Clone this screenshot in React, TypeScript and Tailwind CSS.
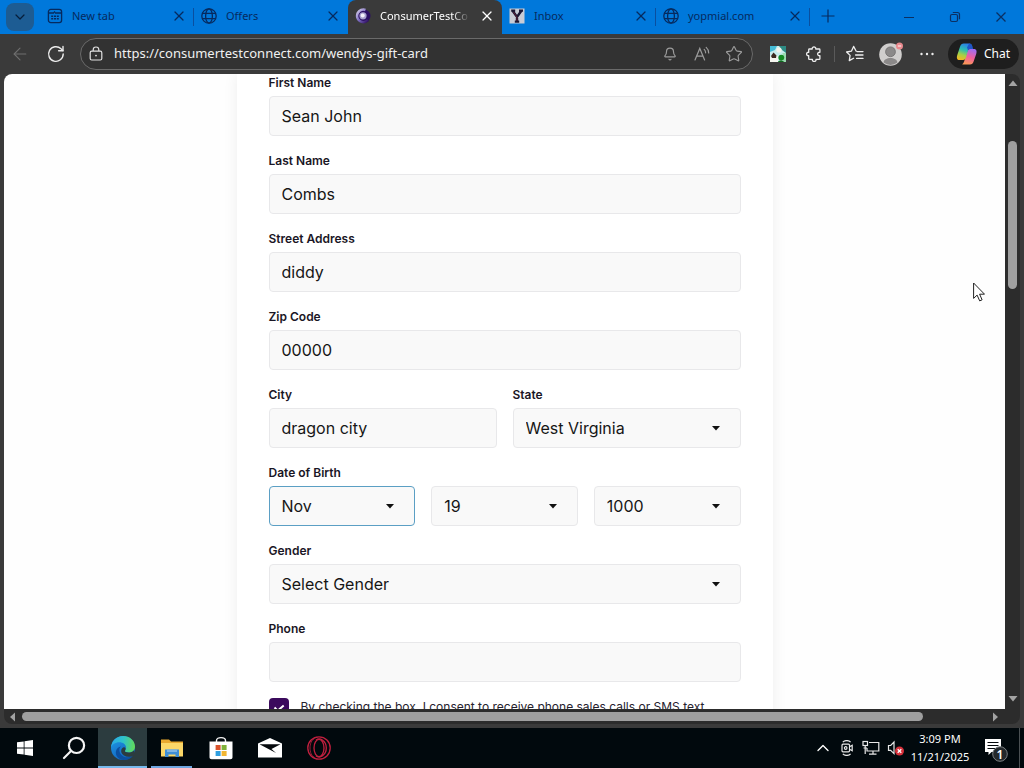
import React, { ReactNode } from "react";
import { ArrowLeft, Bell, ChevronDown, ChevronUp, Star, X } from "lucide-react";

const uiFont = "font-['Noto_Sans','Open_Sans',sans-serif]";
const fieldClass =
  "block h-10 w-full appearance-none rounded border bg-[#f9f9f9] px-3 text-base text-[#161616] outline-none";

/* --- BROWSER ICONS --- */

function NewTabIcon() {
  return (
    <svg className="size-4" viewBox="0 0 16 16" fill="none" stroke="currentColor" strokeWidth="1.3">
      <rect x="1.4" y="1.4" width="13.200" height="13.200" rx="2.400" />
      <path d="M1.400 5h5.100l1.500-1.500M8 5h6.600" />
      <path d="M4.200 8.300h2M7 8.300h2M9.800 8.300h2M4.200 10.800h2M7 10.800h2M9.800 10.800h2" strokeWidth="1.400" />
    </svg>
  );
}

function GlobeIcon() {
  return (
    <svg className="size-4" viewBox="0 0 16 16" fill="none" stroke="currentColor" strokeWidth="1.300">
      <circle cx="8" cy="8" r="7.200" />
      <ellipse cx="8" cy="8" rx="3.400" ry="7.200" />
      <path d="M1.500 5.400h13M1.500 10.600h13" />
    </svg>
  );
}

function ConsumerIcon() {
  return (
    <svg className="size-4" viewBox="0 0 16 16" fill="none">
      <defs>
        <linearGradient id="consumer" x1="0" y1="0" x2="1" y2="1">
          <stop offset="0" stopColor="#d5cde8" />
          <stop offset="0.5" stopColor="#7c6cc0" />
          <stop offset="1" stopColor="#2c0a5e" />
        </linearGradient>
      </defs>
      <circle cx="9" cy="8" r="6.500" fill="#2c0f63" />
      <path d="M10.500 1.900A6.300 6.300 0 1 0 13 12.200" stroke="url(#consumer)" strokeWidth="2.600" />
      <circle cx="8" cy="7.800" r="3.600" fill="#a79fce" />
      <circle cx="7.700" cy="7.600" r="2" fill="#f5f2fb" />
    </svg>
  );
}

function InboxIcon() {
  return (
    <svg className="size-4" viewBox="0 0 16 16">
      <rect x="0.500" y="0.500" width="15" height="15" fill="#c9ccd6" />
      <path d="M2.200 2.600h4M10 2.600h4M3.600 2.800 8 9l4.400-6.200M8 8.600v5M5.800 13.600h4.400" stroke="#1c1734" strokeWidth="2.400" fill="none" />
      <path d="M4.400 4 8 9.200V13" stroke="#8a2538" strokeWidth="0.600" fill="none" />
    </svg>
  );
}

function RefreshIcon() {
  return (
    <svg className="size-5" viewBox="0 0 20 20" fill="none" stroke="#ececec" strokeWidth="1.400" strokeLinecap="round">
      <path d="M17.200 10a7.300 7.300 0 1 1-2.200-5.200L16.800 6.600" />
      <path d="M17 2.400v4.400h-4.400" />
    </svg>
  );
}

function LockIcon() {
  return (
    <svg className="size-4 shrink-0" viewBox="0 0 16 16" fill="none" stroke="#e0e0e0" strokeWidth="1.200">
      <rect x="2.200" y="5.200" width="11.600" height="8.800" rx="1.500" />
      <path d="M5.200 5V3.800a2.800 2.800 0 0 1 5.600 0V5" />
      <circle cx="8" cy="9.600" r="0.900" fill="#e0e0e0" stroke="none" />
    </svg>
  );
}

function ReadAloudIcon() {
  return (
    <svg className="size-5" viewBox="0 0 20 20" fill="none" stroke="#9c9c9c" strokeWidth="1.200" strokeLinecap="round">
      <path d="M3 16 7.800 4.400 12.600 16M4.600 12.200H11" />
      <path d="M12.200 5.400c1 .9 1.400 2 1.400 3.400M14.200 3.400c1.700 1.500 2.500 3.200 2.500 5.600" />
    </svg>
  );
}

function ExtensionIcon() {
  return (
    <svg className="size-4" viewBox="0 0 16 16">
      <rect width="16" height="16" fill="#c8ecec" />
      <path d="M0 0h7l-2 4-5 2z" fill="#45bcd6" />
      <path d="M9 0h7v7l-4-3z" fill="#2e8b84" />
      <circle cx="9" cy="4" r="2.600" fill="#f3f3ea" />
      <path d="M0 11.500 3.400 7 8 10.500V16H0z" fill="#f5f5ef" />
      <path d="M1 10 3.500 6.500l3 3-.5 2.500H2z" fill="#3b2a20" />
      <path d="M12.500 7H16v9h-3z" fill="#9adbb0" />
      <circle cx="11.300" cy="11.600" r="2.900" fill="#138a22" />
      <path d="M8 16c.2-2 5.600-2 5.800 0z" fill="#0e6c1c" />
    </svg>
  );
}

function PuzzleIcon() {
  return (
    <svg className="size-4" viewBox="0 0 16 16" fill="none" stroke="#ededed" strokeWidth="1.300" strokeLinejoin="round">
      <path d="M3.400 3h2.800c-.4-2.800 4-2.800 3.600 0h3.400c.4 0 .7.300.7.700v2.600c-3-.4-3 3.800 0 3.400v3c0 .4-.3.700-.7.700H10c.4 2.800-4 2.800-3.600 0h-3c-.4 0-.7-.3-.7-.7v-3c-2.800.4-2.800-3.800 0-3.400V3.700c0-.4.3-.7.7-.7z" />
    </svg>
  );
}

function FavoritesIcon() {
  return (
    <svg className="size-5" viewBox="0 0 20 20" fill="none" stroke="#ededed" strokeWidth="1.300" strokeLinecap="round" strokeLinejoin="round">
      <path d="M11.200 7.200 8.600 2.400 6.400 7.200 1.600 8l3.500 3.400-.8 5.200 4.300-2.400" />
      <path d="M12 7.600h6M10.600 11h7.400M11.600 14.400H18" />
    </svg>
  );
}

function AvatarIcon() {
  return (
    <svg className="size-6" viewBox="0 0 24 24">
      <circle cx="11.500" cy="12.500" r="11.300" fill="#d0cecd" />
      <circle cx="11.500" cy="9.800" r="4.900" fill="#8b8989" stroke="#6f6d6d" strokeWidth="0.800" />
      <path d="M4.600 20.600c.2-6 13.600-6 13.800 0a11 11 0 0 1-13.800 0z" fill="#8b8989" />
      <circle cx="20.500" cy="4" r="3.500" fill="#e8898d" />
      <path d="M18.800 4h3.400" stroke="#fbe6e6" strokeWidth="1.200" />
    </svg>
  );
}

function CopilotIcon() {
  return (
    <svg className="size-6 shrink-0" viewBox="0 0 24 24">
      <defs>
        <linearGradient id="cpLeft" x1="0.600" y1="0" x2="0.300" y2="1">
          <stop offset="0" stopColor="#2b7de9" />
          <stop offset="0.400" stopColor="#2cc0b0" />
          <stop offset="0.700" stopColor="#a6d046" />
          <stop offset="1" stopColor="#f2b824" />
        </linearGradient>
        <linearGradient id="cpRight" x1="0.600" y1="0" x2="0.300" y2="1">
          <stop offset="0" stopColor="#a06cf0" />
          <stop offset="0.500" stopColor="#f0609c" />
          <stop offset="1" stopColor="#fb9a52" />
        </linearGradient>
      </defs>
      <path d="M9.500 22.500h5.500c2 0 3-1.200 3.600-3l2.600-7.500c.9-2.800.3-5-2.200-5h-4c-1.400 0-2.200.8-2.700 2.300l-3 9.700c-.5 1.600-1 2.700-2.300 3.200.5.200 1.500.3 2.500.3z" fill="url(#cpRight)" />
      <path d="M14.200 1.500H8.800C6.900 1.500 5.700 2.700 5.100 4.600L2.300 13c-.9 2.900-.4 5 2.300 5h3.600c1.500 0 2.300-.8 2.800-2.400L13.400 7c.5-1.600 1.300-2.500 2.800-2.500h1.200c-.6-1.900-1.500-3-3.200-3z" fill="url(#cpLeft)" />
      <path d="M14.200 1.500c2 0 2.800 1.400 3.300 3.200l.7 2.300h-3c-1.300 0-1.700.3-2.100 1.400L12 5.500z" fill="#1f55c8" />
    </svg>
  );
}

/* --- TASKBAR ICONS --- */

function WindowsIcon() {
  return (
    <svg className="size-4" viewBox="0 0 16 16" fill="#fff">
      <path d="M0 2.300 6.700 1.400v6.200H0zM7.500 1.300 16 0v7.600H7.500zM0 8.400h6.700v6.200L0 13.700zM7.500 8.400H16V16l-8.500-1.200z" />
    </svg>
  );
}

function SearchIcon() {
  return (
    <svg className="size-6" viewBox="0 0 24 24" fill="none" stroke="#f5f5f5" strokeWidth="2.200" strokeLinecap="round">
      <circle cx="14.500" cy="9.400" r="7.600" />
      <path d="M9 15 2 22" />
    </svg>
  );
}

function EdgeIcon() {
  return (
    <svg className="size-6" viewBox="0 0 24 24">
      <defs>
        <linearGradient id="edgeTop" x1="0" y1="0.400" x2="1" y2="0.500">
          <stop offset="0" stopColor="#2aa9e8" />
          <stop offset="0.500" stopColor="#2fc3c8" />
          <stop offset="1" stopColor="#62d957" />
        </linearGradient>
        <linearGradient id="edgeBody" x1="0" y1="0" x2="0.600" y2="1">
          <stop offset="0" stopColor="#1f9be6" />
          <stop offset="1" stopColor="#1262bd" />
        </linearGradient>
      </defs>
      <circle cx="12" cy="12" r="12" fill="url(#edgeBody)" />
      <path d="M0 11.500C.5 5 5.500 0 12 0c7 0 12 5 12 10.500 0 4-3 6-6.500 6-2.500 0-4.200-.9-3.400-2 .7-.9 1-1.600 1-2.700C15 8.500 12 6.300 8.300 6.300 4 6.300 1 8.600 0 11.500z" fill="url(#edgeTop)" />
      <path d="M8.500 12.500c-1 5.500 4 10 10 8.600 1.500-.4 3-1 3.800-1.700C20.200 22.400 16.500 24 12.500 24 7 23.600 4 19 5 15c.7-2.700 2.500-4 5-4.500-.8.500-1.300 1.200-1.500 2z" fill="#0c4f9f" />
      <path d="M14.100 14.500c-.8 1.100.9 2 3.400 2 2.200 0 4.100-.6 5.300-2 .8 1.500.6 3.600-.5 4.900-2.300 1.400-6.300 1.900-9.300.1-2.200-1.300-3.200-3.600-2.700-5.500.3-1.400 1.300-2.500 2.700-2.700 1.400 0 2.200 1.600 1.100 3.200z" fill="#2c3c3f" />
    </svg>
  );
}

function ExplorerIcon() {
  return (
    <svg className="size-6" viewBox="0 0 24 24">
      <path d="M1 3.500h8l2 2h12V20H1z" fill="#e9a92f" />
      <path d="M1 7h22v13.500H1z" fill="#fbd768" />
      <path d="M5 13.500h14V21h-3.500v-2.600h-7V21H5z" fill="#3f8fd6" />
      <path d="M7 13.500h10v2.500H7z" fill="#7eb5e4" />
    </svg>
  );
}

function StoreIcon() {
  return (
    <svg className="size-6" viewBox="0 0 24 24">
      <path d="M7.500 6V4.500C7.500.6 16.500.6 16.500 4.500V6" fill="none" stroke="#f5f5f5" strokeWidth="1.400" />
      <path d="M.5 5.600h23v15.600c0 1.200-.8 2-2 2h-19c-1.200 0-2-.8-2-2z" fill="#fff" />
      <path d="M6.600 9h5v5h-5z" fill="#d9532c" />
      <path d="M12.600 9h5v5h-5z" fill="#7fb13a" />
      <path d="M6.600 15h5v5h-5z" fill="#2f9fe0" />
      <path d="M12.600 15h5v5h-5z" fill="#f2b632" />
    </svg>
  );
}

function MailIcon() {
  return (
    <svg className="size-6" viewBox="0 0 24 24">
      <path d="M0 7.500 12 2l12 5.500V21.500H0z" fill="#fff" />
      <path d="M1.500 8.200h21L13.500 13l4.500 4z" fill="#05090c" />
    </svg>
  );
}

function OperaIcon() {
  return (
    <svg className="size-6" viewBox="0 0 24 24" fill="none" stroke="#c0203f" strokeWidth="1.300">
      <circle cx="12" cy="12" r="11.200" />
      <ellipse cx="12" cy="12" rx="5" ry="8.600" />
      <path d="M9 4.200c4-3.400 10.300 1 10.300 7.800S13 23 9 19.800" />
      <path d="M9.500 1.200C4 3.500 3 8.500 3 12s1 8.500 6.500 10.800" strokeWidth="0.800" />
    </svg>
  );
}

function CameraIcon() {
  return (
    <svg className="size-4" viewBox="0 0 16 16" fill="none" stroke="#e8e8e8" strokeWidth="1.200">
      <rect x="3" y="4.200" width="7.500" height="7.600" rx="1" />
      <circle cx="6.700" cy="8" r="1.300" />
      <path d="m10.500 6.800 2.700-1.600v5.600l-2.700-1.600M3.800 2.200C6 0 9.500 0 11.600 2.200M3.800 13.800c2.200 2.200 5.700 2.200 7.800 0" />
    </svg>
  );
}

function NetworkIcon() {
  return (
    <svg className="h-4 w-[18px]" viewBox="0 0 18 16" fill="none" stroke="#e8e8e8" strokeWidth="1.200">
      <path d="M7 2.500h9.800v8.500H5V8" />
      <rect x="1" y="1.500" width="4.500" height="4" />
      <path d="M3.200 5.500V14M11 11v3M7 14.200h7.500M1.500 8h3.500" />
    </svg>
  );
}

function SpeakerIcon() {
  return (
    <svg className="h-4 w-[18px]" viewBox="0 0 18 16" fill="none" stroke="#e8e8e8" strokeWidth="1.200">
      <path d="M2.500 5.500h2.200L8 2v11.600L4.700 10.400H2.500z" />
      <circle cx="13.500" cy="11" r="4.500" fill="#d5303a" stroke="none" />
      <path d="m11.700 9.200 3.600 3.600m0-3.600-3.600 3.600" stroke="#fff" strokeWidth="1.300" />
    </svg>
  );
}

function NotificationIcon() {
  return (
    <svg className="h-7 w-6" viewBox="0 0 24 28">
      <path d="M1 5h16v13H7.500L4.500 21v-3H1z" fill="#fff" />
      <path d="M3.500 8.500h11M3.500 11.500h11M3.500 14.500h8" stroke="#05090c" strokeWidth="1" />
      <circle cx="16" cy="20" r="7.300" fill="#23282b" stroke="#7b8083" />
      <text x="16" y="24.500" textAnchor="middle" fontSize="12" fontWeight="600" fill="#fff">1</text>
    </svg>
  );
}

/* --- TABS --- */

interface TabProps {
  icon: ReactNode;
  title: string;
  active?: boolean;
  divider?: boolean;
}

function Tab({ icon, title, active, divider }: TabProps) {
  return (
    <div
      className={`relative flex w-[154px] min-w-0 items-center gap-[9px] px-[7px] pb-[2px] ${
        active ? "rounded-t-lg bg-[#3a3a3a] text-white" : "text-[#062a5e]"
      }`}
    >
      <span className="shrink-0">{icon}</span>
      <span
        className={`min-w-0 flex-1 text-[11px] whitespace-nowrap ${
          active ? "[mask-image:linear-gradient(to_right,black_80%,transparent)]" : ""
        }`}
      >
        {title}
      </span>
      <button type="button" aria-label={`Close ${title}`} className="shrink-0">
        <X className="size-4" strokeWidth={1.8} />
      </button>
      {divider && <span className="absolute top-2 right-0 h-[18px] w-px bg-[#0a4f9f]" />}
    </div>
  );
}

function TabStrip() {
  return (
    <div className="flex h-[34px] shrink-0 bg-[#0078db]">
      <button type="button" aria-label="Tab actions" className="mx-1.5 mt-[3px] flex size-7 items-center justify-center rounded-lg bg-[#1d5c93] text-[#071d3a]">
        <ChevronDown className="size-4" strokeWidth={1.8} />
      </button>
      <Tab icon={<NewTabIcon />} title="New tab" divider />
      <Tab icon={<GlobeIcon />} title="Offers" />
      <Tab icon={<ConsumerIcon />} title="ConsumerTestCo" active />
      <Tab icon={<InboxIcon />} title="Inbox" divider />
      <Tab icon={<GlobeIcon />} title="yopmial.com" divider />
      <button type="button" aria-label="New tab" className="flex w-[35px] items-center justify-center pb-[2px] text-[#062a5e]">
        <svg className="size-4" viewBox="0 0 16 16" stroke="currentColor" strokeWidth="1.200">
          <path d="M1.500 8h13M8 1.500v13" />
        </svg>
      </button>
      <div className="ml-auto flex text-[#0a2f63]">
        <button type="button" aria-label="Minimize" className="flex w-[46px] items-center justify-center">
          <span className="h-px w-2.5 bg-current" />
        </button>
        <button type="button" aria-label="Restore" className="flex w-[46px] items-center justify-center">
          <svg className="size-3" viewBox="0 0 12 12" fill="none" stroke="currentColor" strokeWidth="1.200">
            <rect x="1.500" y="3.500" width="7" height="7" rx="1.500" />
            <path d="M3.800 1.500h4.700a2 2 0 0 1 2 2v4.700" />
          </svg>
        </button>
        <button type="button" aria-label="Close" className="flex w-[46px] items-center justify-center">
          <svg className="size-3" viewBox="0 0 12 12" stroke="currentColor" strokeWidth="1.300">
            <path d="m1.500 1.500 9 9m0-9-9 9" />
          </svg>
        </button>
      </div>
    </div>
  );
}

/* --- TOOLBAR --- */

function ToolButton({ label, children }: { label: string; children: ReactNode }) {
  return (
    <button type="button" aria-label={label} className="flex h-8 w-9 shrink-0 items-center justify-center text-[#ededed]">
      {children}
    </button>
  );
}

function Toolbar() {
  return (
    <div className="flex h-10 shrink-0 items-center bg-[#3a3a3a] pr-[5px] pl-0.5">
      <ToolButton label="Back">
        <ArrowLeft className="size-5 text-[#6f6f6f]" strokeWidth={1.3} />
      </ToolButton>
      <ToolButton label="Refresh">
        <RefreshIcon />
      </ToolButton>
      <div className="mr-[7px] ml-1.5 flex h-8 min-w-0 flex-1 items-center rounded-full border border-[#6a6a6a] bg-[#323232] pr-0.5 pl-[7px]">
        <LockIcon />
        <input
          aria-label="Address"
          className="ml-2.5 min-w-0 flex-1 bg-transparent text-[13px] text-[#f0f0f0] outline-none"
          defaultValue="https://consumertestconnect.com/wendys-gift-card"
        />
        <button type="button" aria-label="Notifications" className="flex w-8 justify-center">
          <Bell className="size-3.5 text-[#9c9c9c]" strokeWidth={2} />
        </button>
        <button type="button" aria-label="Read aloud" className="flex w-8 justify-center">
          <ReadAloudIcon />
        </button>
        <button type="button" aria-label="Add to favorites" className="flex w-8 justify-center">
          <Star className="size-[18px] text-[#9c9c9c]" strokeWidth={1.5} />
        </button>
      </div>
      <ToolButton label="Extension">
        <ExtensionIcon />
      </ToolButton>
      <ToolButton label="Extensions">
        <PuzzleIcon />
      </ToolButton>
      <span className="mx-0.5 h-4 w-px bg-[#5a5a5a]" />
      <ToolButton label="Favorites">
        <FavoritesIcon />
      </ToolButton>
      <ToolButton label="Profile">
        <AvatarIcon />
      </ToolButton>
      <ToolButton label="Settings and more">
        <svg className="size-4" viewBox="0 0 16 16" fill="currentColor">
          <circle cx="2.500" cy="8" r="1.200" />
          <circle cx="8" cy="8" r="1.200" />
          <circle cx="13.500" cy="8" r="1.200" />
        </svg>
      </ToolButton>
      <button type="button" className="ml-[3px] flex h-[30px] w-[71px] shrink-0 items-center gap-[5px] rounded-full bg-[#1e1e1e] pl-[7px] text-xs text-white">
        <CopilotIcon />
        Chat
      </button>
    </div>
  );
}

/* --- FORM --- */

function Label({ htmlFor, children }: { htmlFor: string; children: ReactNode }) {
  return (
    <label htmlFor={htmlFor} className="mb-1 block text-xs leading-[18px] font-semibold text-[#1a1625]">
      {children}
    </label>
  );
}

function TextField({ id, label, value }: { id: string; label: string; value?: string }) {
  return (
    <div>
      <Label htmlFor={id}>{label}</Label>
      <input id={id} className={`${fieldClass} border-[#e8e8ea]`} defaultValue={value} />
    </div>
  );
}

interface SelectBoxProps {
  id: string;
  value: string;
  label?: string;
  focused?: boolean;
}

function SelectBox({ id, value, label, focused }: SelectBoxProps) {
  return (
    <div className="relative">
      <select
        id={id}
        aria-label={label}
        className={`${fieldClass} ${focused ? "border-[#5b9fc4]" : "border-[#e8e8ea]"}`}
      >
        <option>{value}</option>
      </select>
      <svg className="pointer-events-none absolute top-[18px] right-5 h-[5px] w-2.5" viewBox="0 0 10 5">
        <path d="M1 0h8L5 4.500z" fill="#111" />
      </svg>
    </div>
  );
}

function GiftCardForm() {
  return (
    <form className="mx-auto flex w-full max-w-[536px] flex-col gap-4 bg-white px-8 font-['Inter',sans-serif] shadow-[0_0_14px_rgba(0,0,0,0.07)]">
      <TextField id="first" label="First Name" value="Sean John" />
      <TextField id="last" label="Last Name" value="Combs" />
      <TextField id="street" label="Street Address" value="diddy" />
      <TextField id="zip" label="Zip Code" value="00000" />
      <div className="grid grid-cols-2 gap-4">
        <TextField id="city" label="City" value="dragon city" />
        <div>
          <Label htmlFor="state">State</Label>
          <SelectBox id="state" value="West Virginia" />
        </div>
      </div>
      <div>
        <Label htmlFor="month">Date of Birth</Label>
        <div className="grid grid-cols-3 gap-4">
          <SelectBox id="month" value="Nov" focused />
          <SelectBox id="day" label="Day" value="19" />
          <SelectBox id="year" label="Year" value="1000" />
        </div>
      </div>
      <div>
        <Label htmlFor="gender">Gender</Label>
        <SelectBox id="gender" value="Select Gender" />
      </div>
      <TextField id="phone" label="Phone" />
      <div className="flex items-start gap-3 pb-8">
        <span className="relative size-5 shrink-0">
          <input id="consent" type="checkbox" defaultChecked className="block size-5 appearance-none rounded bg-[#3b0a5c]" />
          <svg className="pointer-events-none absolute inset-0 size-5" viewBox="0 0 20 20" fill="none" stroke="#fff" strokeWidth="2">
            <path d="m5.500 9.500 3.200 3.200 6-5.200" />
          </svg>
        </span>
        <label htmlFor="consent" className="text-xs leading-[18px] text-[#26222e]">
          By checking the box, I consent to receive phone sales calls or SMS text
        </label>
      </div>
    </form>
  );
}

/* --- PAGE FRAME WITH SCROLLBARS --- */

function PageFrame() {
  return (
    <div className="flex min-h-0 flex-1 bg-[#3a3a3a] px-1 pb-1">
      <div className="grid min-w-0 flex-1 grid-cols-[minmax(0,1fr)_15px] grid-rows-[minmax(0,1fr)_15px] overflow-hidden rounded-lg bg-[#2c2c2c]">
        <main className="overflow-hidden bg-[#fefefe]">
          <GiftCardForm />
        </main>
        <div className="flex flex-col items-center">
          <svg className="h-[18px] w-2.5 shrink-0" viewBox="0 0 10 18" fill="#a3a3a3">
            <path d="M.5 12 5 6.500 9.500 12z" />
          </svg>
          <div className="flex-[49]" />
          <div className="w-[9px] flex-[148] rounded-full bg-[#9f9f9f]" />
          <div className="flex-[402]" />
          <svg className="h-[18px] w-2.5 shrink-0" viewBox="0 0 10 18" fill="#a3a3a3">
            <path d="M.5 5h9L5 10.500z" />
          </svg>
        </div>
        <div className="flex items-center">
          <svg className="h-2.5 w-[18px] shrink-0" viewBox="0 0 18 10" fill="#a3a3a3">
            <path d="M11 .5v9L6 5z" />
          </svg>
          <div className="h-[9px] flex-[901] rounded-full bg-[#9f9f9f]" />
          <div className="flex-[64]" />
          <svg className="h-2.5 w-[18px] shrink-0" viewBox="0 0 18 10" fill="#a3a3a3">
            <path d="M6 .5v9L11 5z" />
          </svg>
        </div>
      </div>
    </div>
  );
}

/* --- TASKBAR --- */

function TaskButton({ label, state, children }: { label: string; state?: "active" | "open"; children: ReactNode }) {
  return (
    <button
      type="button"
      aria-label={label}
      className={`relative flex w-[49px] items-center justify-center ${state === "active" ? "bg-[#2c3c3f]" : ""}`}
    >
      {children}
      {state === "active" && <span className="absolute inset-x-0 bottom-0 h-0.5 bg-[#76b9ed]" />}
      {state === "open" && <span className="absolute inset-x-1 bottom-0 h-0.5 bg-[#6ea6e0]" />}
    </button>
  );
}

function Taskbar() {
  return (
    <footer className="flex h-10 shrink-0 bg-[#01090d]">
      <TaskButton label="Start"><WindowsIcon /></TaskButton>
      <TaskButton label="Search"><SearchIcon /></TaskButton>
      <TaskButton label="Microsoft Edge" state="active"><EdgeIcon /></TaskButton>
      <TaskButton label="File Explorer" state="open"><ExplorerIcon /></TaskButton>
      <TaskButton label="Microsoft Store"><StoreIcon /></TaskButton>
      <TaskButton label="Mail"><MailIcon /></TaskButton>
      <TaskButton label="Opera"><OperaIcon /></TaskButton>
      <div className="ml-auto flex items-center text-white">
        <button type="button" aria-label="Show hidden icons" className="flex w-6 justify-center">
          <ChevronUp className="size-5" strokeWidth={1.6} />
        </button>
        <span className="flex w-6 justify-center"><CameraIcon /></span>
        <span className="flex w-6 justify-center"><NetworkIcon /></span>
        <span className="flex w-6 justify-center"><SpeakerIcon /></span>
        <time className="w-[66px] text-center text-[11px] leading-[18px] whitespace-nowrap">
          3:09 PM
          <br />
          11/21/2025
        </time>
        <button type="button" aria-label="Notifications" className="flex w-[46px] justify-center">
          <NotificationIcon />
        </button>
        <span className="mr-1 h-10 w-px bg-[#4a5053]" />
      </div>
    </footer>
  );
}

export default function App() {
  return (
    <div className={`relative flex h-screen flex-col overflow-hidden ${uiFont}`}>
      <TabStrip />
      <Toolbar />
      <PageFrame />
      <Taskbar />
      {/* mouse pointer */}
      <svg className="pointer-events-none absolute top-[282px] left-[973px] h-5 w-3" viewBox="0 0 12 20">
        <path d="M.6 1v15.400l3.500-3.300 2.600 5.800 2.400-1.100-2.500-5.600h4.900z" fill="#fff" stroke="#222" strokeWidth="1" />
      </svg>
    </div>
  );
}
